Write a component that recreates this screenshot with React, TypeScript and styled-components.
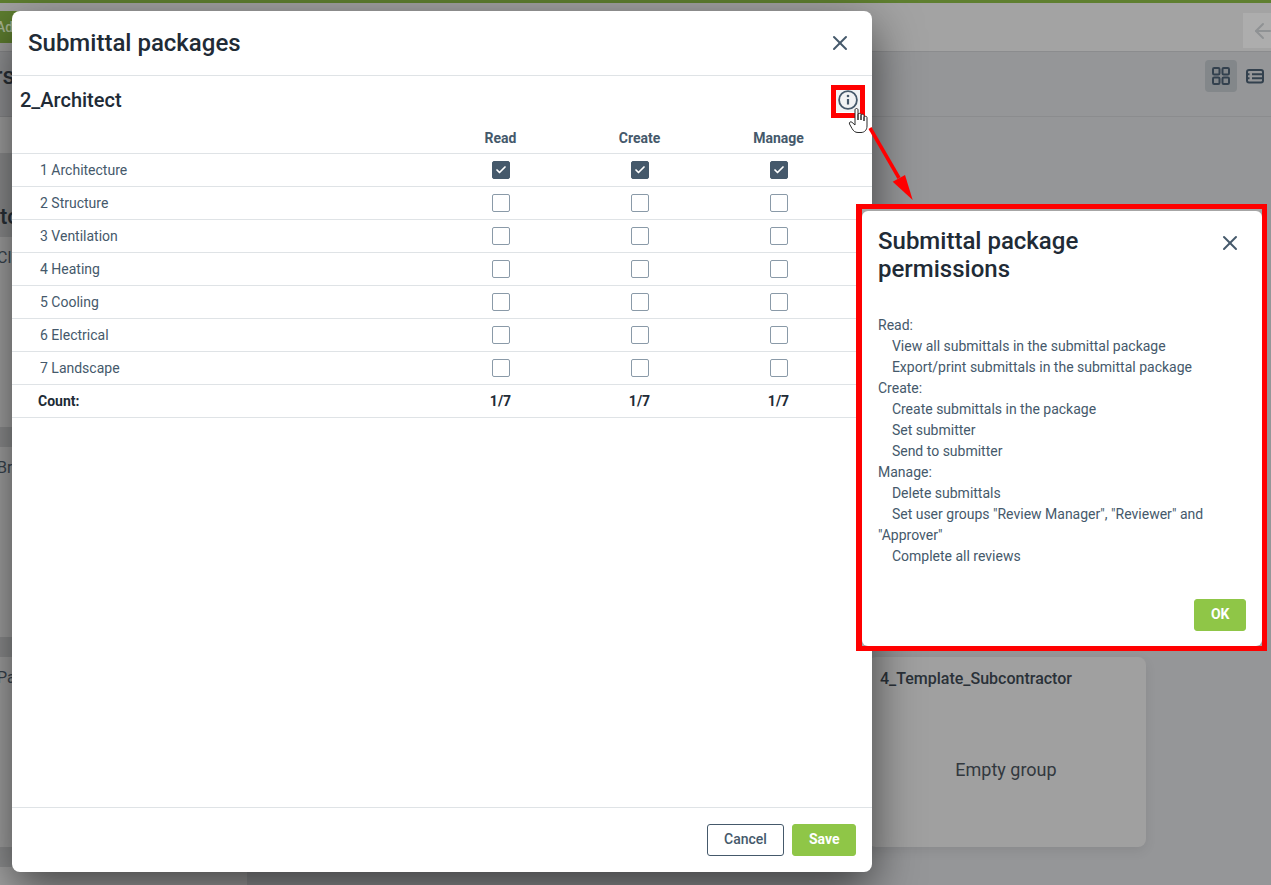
import React from "react";
import styled, { createGlobalStyle } from "styled-components";
import { X, ArrowLeft, Check } from "lucide-react";

const Global = createGlobalStyle`
  html, body { margin: 0; padding: 0; height: 100%; overflow: hidden; }
  body { font-family: Roboto, "Liberation Sans", sans-serif; color: #212b36; }
  * { box-sizing: border-box; }
`;

const Page = styled.div`
  position: relative;
  width: 1271px;
  height: 885px;
  overflow: hidden;
  background: #959698;
  display: flex;
  flex-direction: column;
`;
const TopStrip = styled.div`
  height: 3px;
  background: #5f7f30;
  flex: none;
`;
const TopBar = styled.div`
  height: 49px;
  flex: none;
  background: #a3a3a3;
  border-bottom: 1px solid #8b8c8e;
  display: flex;
  justify-content: space-between;
  align-items: center;
`;
const AddButton = styled.div`
  width: 40px;
  height: 32px;
  background: #5f7f30;
  color: #a9b796;
  font-size: 14px;
  font-weight: 500;
  display: flex;
  align-items: center;
  text-indent: -4px;
`;
const BackButton = styled.div`
  width: 28px;
  height: 35px;
  margin-top: 7px;
  background: #adadad;
  color: #8f9294;
  display: flex;
  align-items: center;
  padding-left: 8px;
  overflow: hidden;
`;
const Toolbar = styled.div`
  height: 65px;
  flex: none;
  border-bottom: 1px solid #8b8c8e;
  display: flex;
  justify-content: space-between;
  align-items: center;
`;
const PageTitle = styled.div`
  font-size: 24px;
  font-weight: 500;
  color: #2a3138;
  margin-left: -47px;
  margin-top: -16px;
`;
const ViewSwitch = styled.div`
  display: flex;
  align-items: center;
  gap: 2px;
  margin-top: -16px;
`;
const ViewButton = styled.div<{ $active?: boolean }>`
  width: 32px;
  height: 32px;
  border-radius: 4px;
  background: ${(p) => (p.$active ? "#83878a" : "transparent")};
  display: flex;
  align-items: center;
  justify-content: center;
`;
const Columns = styled.div`
  flex: 1;
  display: grid;
  grid-template-columns: 247px 1fr;
  min-height: 0;
`;
const LeftColumn = styled.div`
  background: #a5a5a5;
  padding-top: 36px;
  display: flex;
  flex-direction: column;
`;
const LeftBand = styled.div`
  height: 20px;
  flex: none;
  background: #909192;
`;
const LeftHeading = styled.div`
  height: 84px;
  flex: none;
  background: #909192;
  padding-top: 51px;
  font-size: 22px;
  line-height: 26px;
  font-weight: 500;
  color: #2a3138;
`;
const LeftCard = styled.div`
  height: 190px;
  padding-top: 11px;
  flex: none;
  font-size: 16px;
  line-height: 19px;
  color: #3a4550;
  text-indent: -3px;
`;
const RightColumn = styled.div`
  background: #959698;
  padding: 540px 0 0 621px;
`;
const GroupCard = styled.div`
  width: 278px;
  height: 190px;
  background: #a0a0a0;
  border-radius: 8px;
  box-shadow: 0 4px 12px rgba(0, 0, 0, 0.08);
  padding: 12px;
  display: flex;
  flex-direction: column;
`;
const GroupName = styled.div`
  font-size: 16px;
  font-weight: 500;
  color: #2a3138;
`;
const GroupEmpty = styled.div`
  flex: 1;
  display: flex;
  align-items: center;
  justify-content: center;
  font-size: 18px;
  color: #32383e;
  padding: 16px 2px 0 0;
`;

const Modal = styled.div`
  position: absolute;
  left: 12px;
  top: 11px;
  width: 860px;
  height: 861px;
  background: #fff;
  border-radius: 8px;
  box-shadow: 0 16px 48px rgba(0, 0, 0, 0.6);
  display: flex;
  flex-direction: column;
`;
const ModalHeader = styled.div`
  height: 65px;
  flex: none;
  border-bottom: 1px solid #dfe3e6;
  display: flex;
  align-items: center;
  justify-content: space-between;
  padding: 0 20px 0 16px;
`;
const ModalTitle = styled.h2`
  margin: 0;
  font-size: 24px;
  line-height: 32px;
  font-weight: 500;
  color: #212b36;
`;
const CloseButton = styled.div`
  width: 24px;
  height: 24px;
  color: #45596b;
  display: flex;
  align-items: center;
  justify-content: center;
`;
const ModalBody = styled.div`
  flex: 1;
  min-height: 0;
`;
const GroupRow = styled.div`
  height: 48px;
  display: flex;
  align-items: center;
  justify-content: space-between;
  padding: 0 12px 0 8px;
`;
const GroupTitle = styled.div`
  font-size: 20px;
  font-weight: 500;
  color: #212b36;
`;
const InfoButton = styled.div`
  width: 24px;
  height: 24px;
  background: #f1f3f4;
  display: flex;
  align-items: center;
  justify-content: center;
`;
const Row = styled.div<{ $head?: boolean }>`
  display: grid;
  grid-template-columns: 419px 139px 139px 139px 1fr;
  height: ${(p) => (p.$head ? "30px" : "33px")};
  padding-bottom: ${(p) => (p.$head ? "2px" : "0")};
  align-items: center;
  border-bottom: 1px solid #dfe3e6;
  font-size: 14px;
  color: #45596b;
`;
const RowLabel = styled.div<{ $strong?: boolean }>`
  padding-left: ${(p) => (p.$strong ? "26px" : "28px")};
  font-weight: ${(p) => (p.$strong ? 700 : 400)};
  color: ${(p) => (p.$strong ? "#212b36" : "#45596b")};
`;
const Cell = styled.div`
  display: flex;
  justify-content: center;
`;
const HeadCell = styled(Cell)`
  font-weight: 700;
  color: #45596b;
`;
const CountCell = styled(Cell)`
  font-weight: 700;
  color: #212b36;
`;
const Box = styled.div<{ $on?: boolean }>`
  width: 18px;
  height: 18px;
  border-radius: 2px;
  border: 1px solid ${(p) => (p.$on ? "#45596b" : "#8a9aa8")};
  background: ${(p) => (p.$on ? "#45596b" : "#fff")};
  color: #fff;
  display: flex;
  align-items: center;
  justify-content: center;
`;
const ModalFooter = styled.div`
  height: 65px;
  flex: none;
  border-top: 1px solid #dfe3e6;
  display: flex;
  align-items: center;
  justify-content: flex-end;
  gap: 8px;
  padding: 0 16px;
`;
const Button = styled.div<{ $primary?: boolean }>`
  height: 32px;
  padding: 0 ${(p) => (p.$primary ? "15.5px" : "16.5px")} 2px;
  border-radius: 3px;
  display: flex;
  align-items: center;
  justify-content: center;
  font-size: 14px;
  font-weight: ${(p) => (p.$primary ? 700 : 500)};
  background: ${(p) => (p.$primary ? "#8fc647" : "#fff")};
  color: ${(p) => (p.$primary ? "#fff" : "#45596b")};
  border: 1px solid ${(p) => (p.$primary ? "#8fc647" : "#45596b")};
`;

const Highlight = styled.div`
  position: absolute;
  left: 831px;
  top: 85px;
  width: 34px;
  height: 33px;
  border: 5px solid #ff0000;
`;
const Cursor = styled.svg`
  position: absolute;
  left: 848px;
  top: 107px;
`;
const Arrow = styled.svg`
  position: absolute;
  left: 860px;
  top: 120px;
`;
const Frame = styled.div`
  position: absolute;
  left: 856px;
  top: 204px;
  width: 411px;
  height: 447px;
  border: 5px solid #ff0000;
  border-left-width: 6px;
  background: #a6a6a6;
  padding-top: 2px;
`;
const Dialog = styled.div`
  background: #fff;
  height: 100%;
  border-radius: 6px;
  display: flex;
  flex-direction: column;
  padding: 16px 16px 15px;
`;
const DialogHeader = styled.div`
  display: flex;
  justify-content: space-between;
  align-items: flex-start;
`;
const DialogTitle = styled.h2`
  margin: 0;
  font-size: 24px;
  line-height: 28px;
  font-weight: 500;
  color: #212b36;
  width: 260px;
`;
const DialogClose = styled(CloseButton)`
  margin-top: 4px;
  margin-right: 4px;
`;
const DialogText = styled.div`
  flex: 1;
  margin-top: 32px;
  font-size: 14px;
  line-height: 21px;
  color: #45596b;
  white-space: pre-wrap;
`;
const DialogFooter = styled.div`
  display: flex;
  justify-content: flex-end;
`;

const rows = ["1 Architecture", "2 Structure", "3 Ventilation", "4 Heating", "5 Cooling", "6 Electrical", "7 Landscape"];
const perms = `Read:
    View all submittals in the submittal package
    Export/print submittals in the submittal package
Create:
    Create submittals in the package
    Set submitter
    Send to submitter
Manage:
    Delete submittals
    Set user groups "Review Manager", "Reviewer" and "Approver"
    Complete all reviews`;

export default function App() {
  return (
    <Page>
      <Global />
      <TopStrip />
      <TopBar>
        <AddButton>Add</AddButton>
        <BackButton>
          <ArrowLeft size={24} style={{ flex: "none" }} />
        </BackButton>
      </TopBar>
      <Toolbar>
        <PageTitle>Users</PageTitle>
        <ViewSwitch>
          <ViewButton $active>
            <svg width="20" height="20" viewBox="0 0 20 20" fill="none" stroke="#33414e" strokeWidth="2">
              <rect x="2" y="2" width="6.5" height="6.5" rx="1.2" />
              <rect x="11.5" y="2" width="6.5" height="6.5" rx="1.2" />
              <rect x="2" y="11.5" width="6.5" height="6.5" rx="1.2" />
              <rect x="11.5" y="11.5" width="6.5" height="6.5" rx="1.2" />
            </svg>
          </ViewButton>
          <ViewButton>
            <svg width="20" height="20" viewBox="0 0 20 20" fill="none" stroke="#33414e" strokeWidth="2">
              <rect x="2" y="4" width="16" height="12.500" rx="2" />
              <path d="M7 8.200H18M7 12.300H18M2 8.200H4.500M2 12.300H4.500" />
            </svg>
          </ViewButton>
        </ViewSwitch>
      </Toolbar>
      <Columns>
        <LeftColumn>
          <LeftHeading>tc</LeftHeading>
          <LeftCard>Cl</LeftCard>
          <LeftBand />
          <LeftCard>Br</LeftCard>
          <LeftBand />
          <LeftCard>Pa</LeftCard>
          <LeftBand />
        </LeftColumn>
        <RightColumn>
          <GroupCard>
            <GroupName>4_Template_Subcontractor</GroupName>
            <GroupEmpty>Empty group</GroupEmpty>
          </GroupCard>
        </RightColumn>
      </Columns>

      <Modal>
        <ModalHeader>
          <ModalTitle>Submittal packages</ModalTitle>
          <CloseButton>
            <X size={24} strokeWidth={2} />
          </CloseButton>
        </ModalHeader>
        <ModalBody>
          <GroupRow>
            <GroupTitle>2_Architect</GroupTitle>
            <InfoButton>
              <svg width="22" height="22" viewBox="0 0 22 22" fill="none" stroke="#45596b" strokeWidth="1.8">
                <circle cx="11" cy="11" r="8.900" />
                <path d="M11 10v5.500" strokeWidth="2.200" />
                <circle cx="11" cy="7" r="1.300" fill="#45596b" stroke="none" />
              </svg>
            </InfoButton>
          </GroupRow>
          <Row $head>
            <div />
            <HeadCell>Read</HeadCell>
            <HeadCell>Create</HeadCell>
            <HeadCell>Manage</HeadCell>
          </Row>
          {rows.map((r, i) => (
            <Row key={r}>
              <RowLabel>{r}</RowLabel>
              {[0, 1, 2].map((c) => (
                <Cell key={c}>
                  <Box $on={i === 0}>{i === 0 && <Check size={12} strokeWidth={3.5} />}</Box>
                </Cell>
              ))}
            </Row>
          ))}
          <Row>
            <RowLabel $strong>Count:</RowLabel>
            <CountCell>1/7</CountCell>
            <CountCell>1/7</CountCell>
            <CountCell>1/7</CountCell>
          </Row>
        </ModalBody>
        <ModalFooter>
          <Button>Cancel</Button>
          <Button $primary>Save</Button>
        </ModalFooter>
      </Modal>

      <Highlight />
      <Cursor width="21" height="27" viewBox="0 0 21 27" fill="#fff" stroke="#2b2b2b" strokeWidth="1">
        <path d="M7 3c0-2 3-2 3 0V13V7.500c0-1.600 3-1.600 3 0V13V8.500c0-1.600 3-1.600 3 0V14V10.500c0-1.600 3-1.600 3 0V19c0 4-2.500 6.500-6 6.500H10c-3 0-4.500-1.500-6-4L1.500 17c-.8-1.600 1.200-3 2.500-1.700L7 18Z" />
      </Cursor>
      <Arrow width="60" height="85" viewBox="0 0 60 85">
        <path d="M10 8 L39 58" stroke="#ff0000" strokeWidth="3.500" fill="none" />
        <path d="M32.700 61.700 L45 55 L52.700 80 Z" fill="#ff0000" />
      </Arrow>

      <Frame>
        <Dialog>
          <DialogHeader>
            <DialogTitle>Submittal package permissions</DialogTitle>
            <DialogClose>
              <X size={24} strokeWidth={2} />
            </DialogClose>
          </DialogHeader>
          <DialogText>{perms}</DialogText>
          <DialogFooter>
            <Button $primary>OK</Button>
          </DialogFooter>
        </Dialog>
      </Frame>
    </Page>
  );
}
